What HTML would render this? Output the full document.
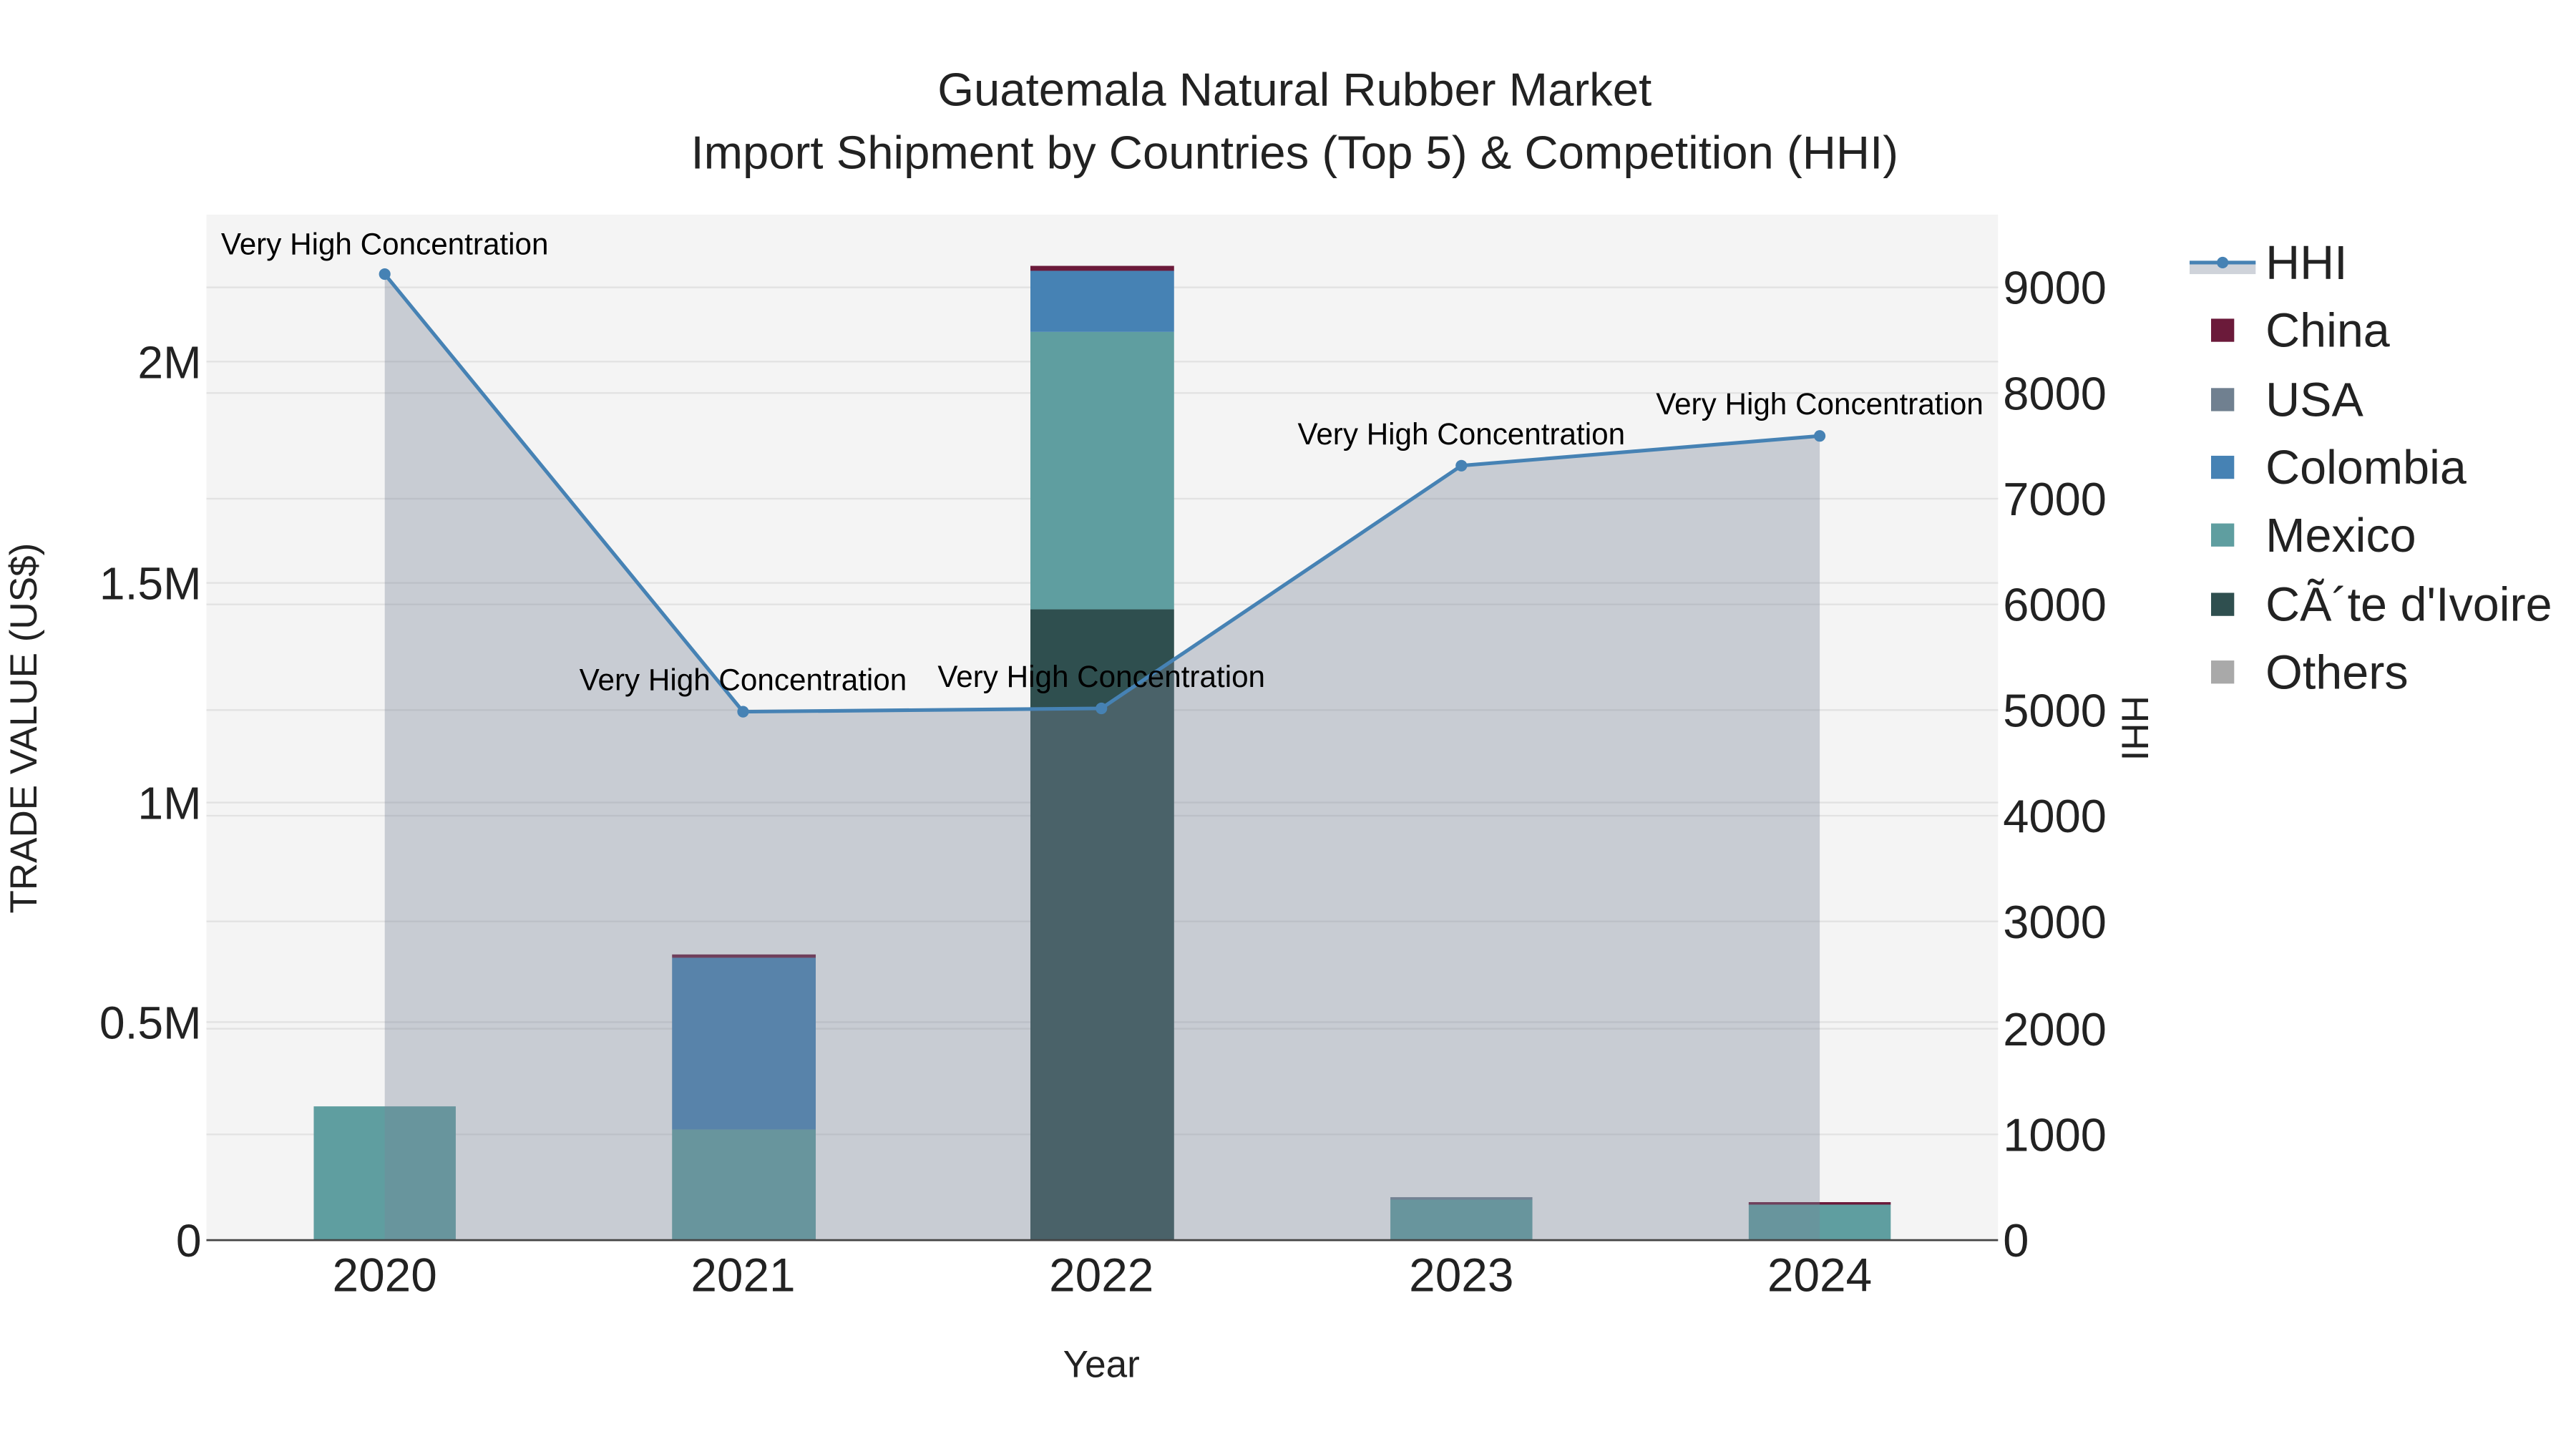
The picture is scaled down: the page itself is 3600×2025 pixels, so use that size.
<!DOCTYPE html>
<html><head><meta charset="utf-8"><style>html,body{margin:0;padding:0;background:#fff}svg{display:block}text{font-family:"Liberation Sans",sans-serif}</style></head><body>
<svg width="3600" height="2025" viewBox="0 0 1560 877.5" xmlns="http://www.w3.org/2000/svg">
<rect x="0" y="0" width="1560" height="877.5" fill="#fff"/>
<rect x="125" y="130" width="1085" height="621" fill="#f4f4f4"/>
<g stroke="#e2e2e2" stroke-width="1">
<line x1="125" x2="1210" y1="619" y2="619"/><line x1="125" x2="1210" y1="486" y2="486"/><line x1="125" x2="1210" y1="353" y2="353"/><line x1="125" x2="1210" y1="219" y2="219"/>
<line x1="125" x2="1210" y1="687" y2="687"/><line x1="125" x2="1210" y1="623" y2="623"/><line x1="125" x2="1210" y1="558" y2="558"/><line x1="125" x2="1210" y1="494" y2="494"/><line x1="125" x2="1210" y1="430" y2="430"/><line x1="125" x2="1210" y1="366" y2="366"/><line x1="125" x2="1210" y1="302" y2="302"/><line x1="125" x2="1210" y1="238" y2="238"/><line x1="125" x2="1210" y1="174" y2="174"/>
</g>
<rect x="190" y="670" width="86" height="81" fill="#5f9ea0"/>
<rect x="407" y="684" width="87" height="67" fill="#5f9ea0"/>
<rect x="407" y="580" width="87" height="104" fill="#4682b4"/>
<rect x="407" y="578" width="87" height="2" fill="#6b1a3a"/>
<rect x="624" y="369" width="87" height="382" fill="#2f4f4f"/>
<rect x="624" y="201" width="87" height="168" fill="#5f9ea0"/>
<rect x="624" y="164" width="87" height="37" fill="#4682b4"/>
<rect x="624" y="161" width="87" height="3" fill="#6b1a3a"/>
<rect x="842" y="726" width="86" height="25" fill="#5f9ea0"/>
<rect x="842" y="725" width="86" height="1.5" fill="#708090"/>
<rect x="1059" y="729" width="86" height="22" fill="#5f9ea0"/>
<rect x="1059" y="728" width="86" height="1.5" fill="#6b1a3a"/>
<polygon points="233,751 233,166 450,431 667,429 885,282 1102,264 1102,751" fill="rgba(122,133,152,0.36)"/>
<polyline points="233,166 450,431 667,429 885,282 1102,264" fill="none" stroke="#4682b4" stroke-width="2.2"/>
<g fill="#4682b4"><circle cx="233" cy="166" r="3.5"/><circle cx="450" cy="431" r="3.5"/><circle cx="667" cy="429" r="3.5"/><circle cx="885" cy="282" r="3.5"/><circle cx="1102" cy="264" r="3.5"/></g>
<line x1="125" x2="1210" y1="751" y2="751" stroke="#444" stroke-width="1.2"/>
<g font-size="18.3" fill="#000" text-anchor="middle">
<text x="233" y="154">Very High Concentration</text>
<text x="450" y="418">Very High Concentration</text>
<text x="667" y="416">Very High Concentration</text>
<text x="885" y="269">Very High Concentration</text>
<text x="1102" y="251">Very High Concentration</text>
</g>
<g font-size="28.3" fill="#222" text-anchor="middle">
<text x="784" y="64">Guatemala Natural Rubber Market</text>
<text x="784" y="102">Import Shipment by Countries (Top 5) &amp; Competition (HHI)</text>
</g>
<g font-size="27.8" fill="#222" text-anchor="end">
<text x="122" y="761">0</text><text x="122" y="629">0.5M</text><text x="122" y="496">1M</text><text x="122" y="363">1.5M</text><text x="122" y="229">2M</text>
</g>
<g font-size="28.2" fill="#222" text-anchor="start">
<text x="1213" y="761">0</text><text x="1213" y="697">1000</text><text x="1213" y="633">2000</text><text x="1213" y="568">3000</text><text x="1213" y="504">4000</text><text x="1213" y="440">5000</text><text x="1213" y="376">6000</text><text x="1213" y="312">7000</text><text x="1213" y="248">8000</text><text x="1213" y="184">9000</text>
</g>
<g font-size="28.5" fill="#222" text-anchor="middle">
<text x="233" y="782">2020</text><text x="450" y="782">2021</text><text x="667" y="782">2022</text><text x="885" y="782">2023</text><text x="1102" y="782">2024</text>
</g>
<text x="667" y="834" font-size="23" fill="#222" text-anchor="middle">Year</text>
<text transform="translate(22,441) rotate(-90)" font-size="23" fill="#222" text-anchor="middle">TRADE VALUE (US$)</text>
<text transform="translate(1285,441) rotate(90)" font-size="23" fill="#222" text-anchor="middle">HHI</text>
<rect x="1326" y="159" width="40" height="7" fill="rgba(122,133,152,0.36)"/>
<line x1="1326" x2="1366" y1="159" y2="159" stroke="#4682b4" stroke-width="2.2"/>
<circle cx="1346" cy="159" r="3.5" fill="#4682b4"/>
<rect x="1339" y="193" width="14" height="14" fill="#6b1a3a"/>
<rect x="1339" y="235" width="14" height="14" fill="#708090"/>
<rect x="1339" y="276" width="14" height="14" fill="#4682b4"/>
<rect x="1339" y="317" width="14" height="14" fill="#5f9ea0"/>
<rect x="1339" y="359" width="14" height="14" fill="#2f4f4f"/>
<rect x="1339" y="400" width="14" height="14" fill="#a9a9a9"/>
<g font-size="28.8" fill="#222">
<text x="1372" y="169">HHI</text><text x="1372" y="210">China</text><text x="1372" y="252">USA</text><text x="1372" y="293">Colombia</text><text x="1372" y="334">Mexico</text><text x="1372" y="376">CÃ´te d'Ivoire</text><text x="1372" y="417">Others</text>
</g>
</svg>
</body></html>
